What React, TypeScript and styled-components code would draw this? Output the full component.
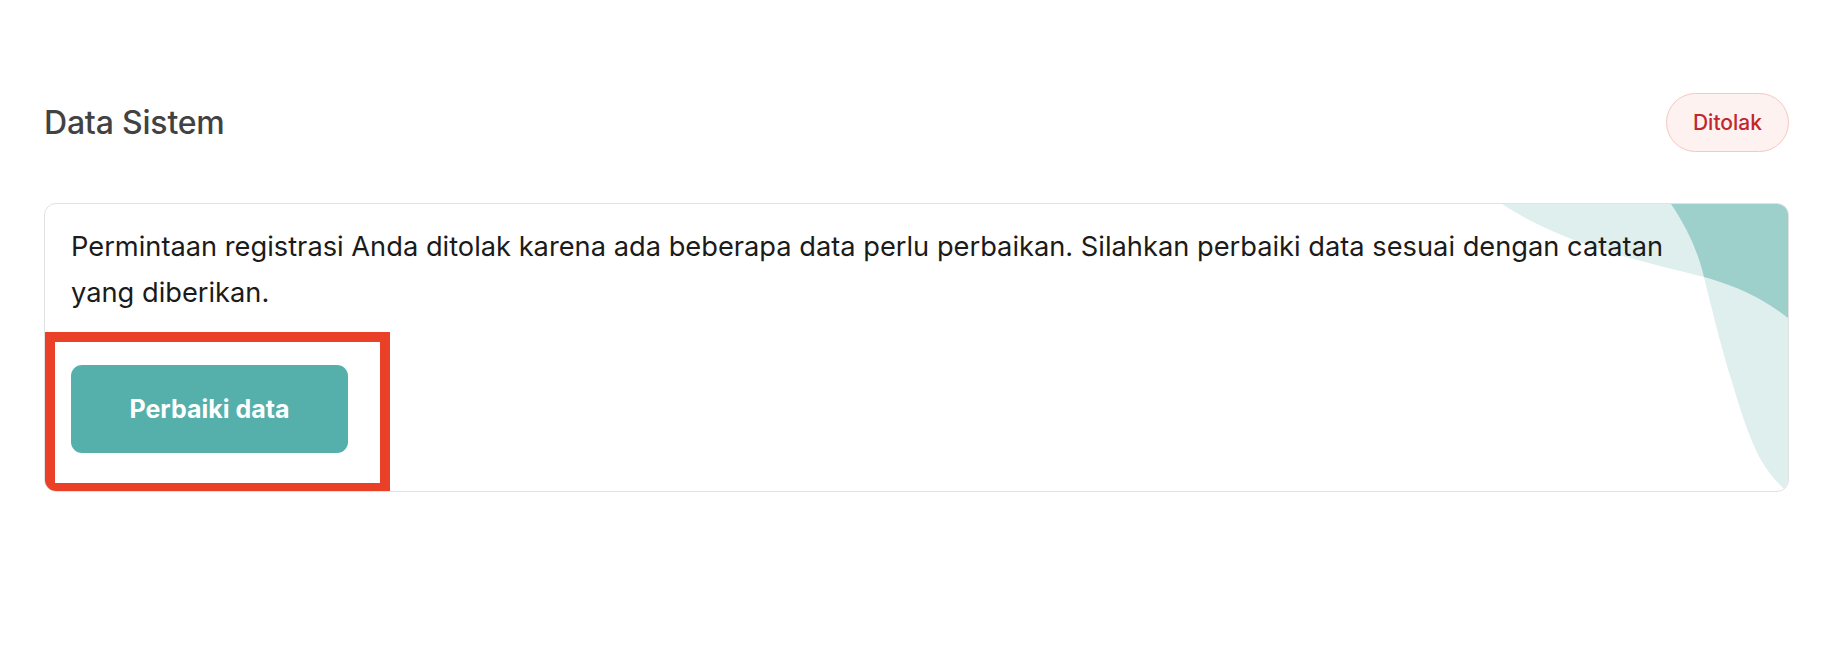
import React from "react";
import styled, { createGlobalStyle } from "styled-components";

const GlobalStyle = createGlobalStyle`
  html, body {
    margin: 0;
    padding: 0;
    background: #ffffff;
  }
  body {
    font-family: Inter, "Noto Sans", "Liberation Sans", sans-serif;
    -webkit-font-smoothing: antialiased;
  }
  * { box-sizing: border-box; }
`;

const Page = styled.div`
  padding: 93px 47px 0 44px;
  width: 1836px;
`;

const Header = styled.div`
  display: flex;
  align-items: center;
  justify-content: space-between;
  height: 59px;
`;

const Title = styled.h2`
  margin: 0;
  font-size: 32px;
  font-weight: 500;
  color: #424242;
  letter-spacing: -0.2px;
`;

const Badge = styled.span`
  display: inline-flex;
  align-items: center;
  justify-content: center;
  height: 59px;
  padding: 0 26px;
  border-radius: 30px;
  border: 1px solid #f4c8c2;
  background: #fdf2f0;
  color: #c1272d;
  font-size: 21px;
  font-weight: 500;
`;

const Card = styled.div`
  position: relative;
  margin-top: 51px;
  border: 1px solid #e2e2e2;
  border-radius: 12px;
  overflow: hidden;
  padding: 20px 27px 38px 26px;
  background: #ffffff;
`;

const Decor = styled.svg`
  position: absolute;
  top: 0;
  right: 0;
  width: 300px;
  height: 288px;
  pointer-events: none;
`;

const Message = styled.p`
  position: relative;
  margin: 0;
  max-width: 1650px;
  font-size: 27.25px;
  line-height: 46px;
  color: #1b1b1b;
  font-weight: 400;
`;

const PrimaryButton = styled.button`
  position: relative;
  display: flex;
  align-items: center;
  justify-content: center;
  margin-top: 49px;
  width: 277px;
  height: 88px;
  border: none;
  border-radius: 11px;
  background: #55b0ab;
  color: #ffffff;
  font-family: inherit;
  font-size: 25px;
  font-weight: 700;
  cursor: pointer;
`;

const Highlight = styled.div`
  position: absolute;
  left: 0;
  top: 128px;
  width: 345px;
  height: 161px;
  border: 10px solid #e94027;
  pointer-events: none;
`;

export default function App() {
  return (
    <>
      <GlobalStyle />
      <Page>
        <Header>
          <Title>Data Sistem</Title>
          <Badge>Ditolak</Badge>
        </Header>
        <Card>
          <Decor viewBox="0 0 300 288" preserveAspectRatio="none">
            <defs>
              <clipPath id="waveA">
                <path d="M 14,0 C 71,37 131,52 216,73 C 256,84 281,99 300,114 L 300,0 Z" />
              </clipPath>
            </defs>
            <path
              d="M 14,0 C 71,37 131,52 216,73 C 256,84 281,99 300,114 L 300,0 Z"
              fill="#dfefed"
            />
            <path
              d="M 183,0 C 198,22 210,47 216,73 C 225,110 235,150 244,178 C 255,215 265,245 278,264 C 285,274 292,282 300,288 L 300,0 Z"
              fill="#dfefed"
            />
            <path
              clipPath="url(#waveA)"
              d="M 183,0 C 198,22 210,47 216,73 C 225,110 235,150 244,178 C 255,215 265,245 278,264 C 285,274 292,282 300,288 L 300,0 Z"
              fill="#9dcfcb"
            />
          </Decor>
          <Message>
            Permintaan registrasi Anda ditolak karena ada beberapa data perlu
            perbaikan. Silahkan perbaiki data sesuai dengan catatan yang
            diberikan.
          </Message>
          <PrimaryButton>Perbaiki data</PrimaryButton>
          <Highlight />
        </Card>
      </Page>
    </>
  );
}
